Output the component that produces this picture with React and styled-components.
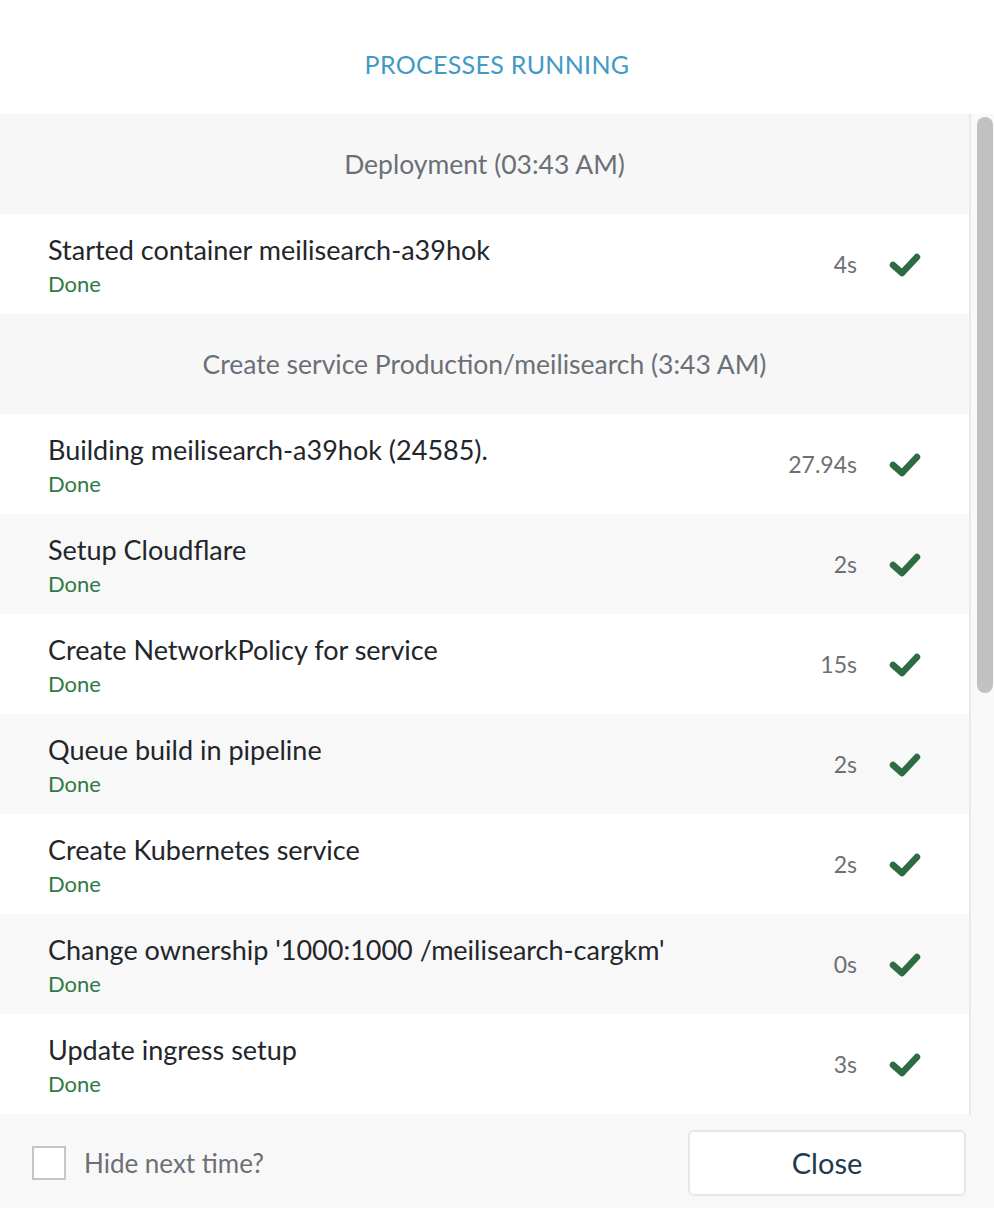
import styled, { createGlobalStyle } from 'styled-components';

const GlobalStyle = createGlobalStyle`
    html, body {
        margin: 0;
        padding: 0;
        background: #fff;
    }
    body {
        font-family: Lato, "Open Sans", sans-serif;
    }
`;

const Modal = styled.div`
    display: flex;
    flex-direction: column;
    width: 994px;
    height: 1208px;
    background: #fff;
`;

const Header = styled.div`
    flex: 0 0 114px;
    display: flex;
    align-items: center;
    justify-content: center;
    color: #3f9bc6;
    font-size: 25px;
    letter-spacing: 0.3px;
    padding-top: 14px;
    box-sizing: border-box;
`;

const ListArea = styled.div`
    flex: 1 1 auto;
    min-height: 0;
    display: flex;
`;

const Scroller = styled.div`
    flex: 1;
    overflow: hidden;
`;

const ScrollTrack = styled.div`
    flex: 0 0 25px;
    box-sizing: border-box;
    background: #f9f9f9;
    border-left: 2px solid #e9e9e9;
    padding: 3px 1px 0 6px;
`;

const Thumb = styled.div`
    height: 576px;
    border-radius: 9px;
    background: #c1c1c1;
`;

const GroupHeader = styled.div`
    height: 100px;
    display: flex;
    align-items: center;
    justify-content: center;
    background: #f7f7f7;
    color: #6b7077;
    font-size: 26.5px;
`;

const Row = styled.div`
    height: 100px;
    display: flex;
    align-items: center;
    padding: 4px 46px 0 48px;
    box-sizing: border-box;
    background: ${p => (p.$shaded ? '#f8f8f8' : '#fff')};
`;

const Info = styled.div`
    flex: 1;
    display: flex;
    flex-direction: column;
    gap: 3px;
`;

const Title = styled.div`
    color: #22262b;
    font-size: 27px;
    line-height: 32px;
`;

const Status = styled.div`
    color: #2f7a45;
    font-size: 22px;
    line-height: 30px;
`;

const Duration = styled.div`
    color: #6b7077;
    font-size: 23px;
    margin-right: 30px;
    margin-top: -4px;
`;

const Check = styled.svg`
    width: 36px;
    height: 28px;
    display: block;
    margin-top: -4px;
`;

const Footer = styled.div`
    flex: 0 0 94px;
    box-sizing: border-box;
    display: flex;
    align-items: center;
    justify-content: space-between;
    padding: 4px 28px 0 32px;
    background: #f8f8f8;
`;

const CheckLabel = styled.label`
    display: flex;
    align-items: center;
    gap: 18px;
    color: #6b7077;
    font-size: 26px;
    line-height: 36px;
    cursor: pointer;
`;

const Box = styled.span`
    flex: 0 0 auto;
    width: 30px;
    height: 30px;
    border: 2px solid #c6c6c6;
    background: #fff;
`;

const CloseButton = styled.button`
    width: 278px;
    height: 66px;
    background: #fff;
    border: 2px solid #e7e7e7;
    border-radius: 6px;
    color: #1d3a4e;
    font-family: inherit;
    font-size: 29px;
    line-height: 36px;
    cursor: pointer;
`;

const CheckIcon = () => (
    <Check viewBox="0 0 36 28">
        <path
            d="M6 15 L15 23 L30 7"
            fill="none"
            stroke="#2e6b43"
            strokeWidth="6.5"
            strokeLinecap="round"
            strokeLinejoin="round"
        />
    </Check>
);

const groups = [
    {
        title: 'Deployment (03:43 AM)',
        steps: [['Started container meilisearch-a39hok', '4s']],
    },
    {
        title: 'Create service Production/meilisearch (3:43 AM)',
        steps: [
            ['Building meilisearch-a39hok (24585).', '27.94s'],
            ['Setup Cloudflare', '2s'],
            ['Create NetworkPolicy for service', '15s'],
            ['Queue build in pipeline', '2s'],
            ['Create Kubernetes service', '2s'],
            ["Change ownership '1000:1000 /meilisearch-cargkm'", '0s'],
            ['Update ingress setup', '3s'],
            ['Create persistent volume meilisearch-cargkm', '1s'],
            ['Create Kubernetes deployment', '1s'],
            ['Setup environment variables', '0s'],
            ['Create Kubernetes namespace', '1s'],
            ['Validate service configuration', '0s'],
            ['Reserve port for service', '0s'],
        ],
    },
];

const App = () => (
    <Modal>
        <GlobalStyle />
        <Header>PROCESSES RUNNING</Header>
        <ListArea>
            <Scroller>
                {groups.map(group => (
                    <div key={group.title}>
                        <GroupHeader>{group.title}</GroupHeader>
                        {group.steps.map(([name, time], i) => (
                            <Row key={name} $shaded={i % 2 === 1}>
                                <Info>
                                    <Title>{name}</Title>
                                    <Status>Done</Status>
                                </Info>
                                <Duration>{time}</Duration>
                                <CheckIcon />
                            </Row>
                        ))}
                    </div>
                ))}
            </Scroller>
            <ScrollTrack>
                <Thumb />
            </ScrollTrack>
        </ListArea>
        <Footer>
            <CheckLabel>
                <Box />
                Hide next time?
            </CheckLabel>
            <CloseButton>Close</CloseButton>
        </Footer>
    </Modal>
);

export default App;
